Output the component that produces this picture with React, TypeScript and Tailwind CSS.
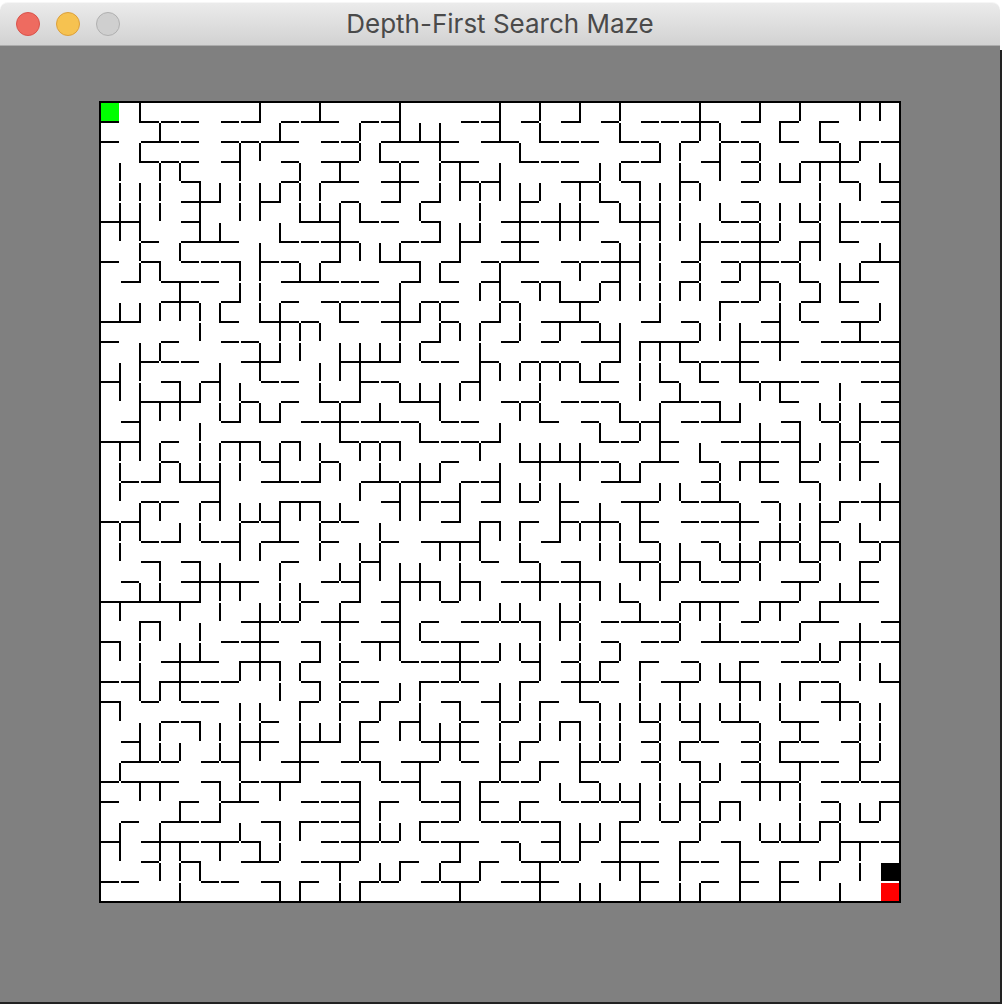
import React from "react";

const COUNT = 40;
const CELL = 20;

/*
 * Walls as "from-to" runs of grid nodes. "<" or ">" closes the corner at the
 * start or at the end of a run; all other run ends stop short of the node.
 */
const HORIZONTAL: string[] = [
  "<0-40>",
  "0-1 <2-3 3-4 4-5 6-7 7-8> 9-10 10-12 13-14 14-15 18-19 19-20 21-22 23-24> 25-26 27-28 28-29 29-31 32-33> <34-35 <36-37",
  "0-1 2-4 4-5 6-7 7-8 8-10 11-12 12-13 14-18 19-21 <22-23 23-24 24-25 <26-27 27-28 29-30 31-32 32-33 <34-35 <36-37 <38-39 39-40",
  "<2-3 3-4 4-5 6-7 9-10 11-13 <14-15 15-16 17-19 <21-22 22-23 23-24 26-27 27-28> 30-31 32-33 35-38",
  "4-5> 9-10 11-13 14-16 18-19 19-20 23-25 26-27> 29-30 32-33 <34-35> <37-38 <39-40",
  "4-6> 8-9> 12-13 14-15> 16-17> 21-22 <25-26 32-33 39-40",
  "0-2 4-5 <10-12 <13-14 14-15 16-17> 20-22 22-25 <26-28 31-32 32-33 <35-36 37-38 38-39 39-40",
  "2-3 4-7 <9-10 10-11 11-13 15-16 16-17> 18-19> 20-22 25-26 30-31 31-32 32-34 <35-36 <37-38",
  "0-1 2-3> 4-5 5-6 6-7> 8-9 9-10 11-12> <14-16> 17-18> 19-20 20-22 23-24 24-25 25-27 29-30 31-32 32-34 34-35 38-40",
  "1-2> 3-5 5-6 9-12 12-13 13-14 15-16> <17-18 19-20 21-22 22-23> 25-26 <29-30 31-32 33-34 <35-36 37-39",
  "3-5 6-7> 9-10 11-12 12-13 13-14 14-15 16-17 17-18 20-21 <23-25 <31-32 32-33 35-36> <37-38",
  "0-2> <6-7 <8-10 10-11 <12-13 14-16> 17-18 19-20> 22-25 27-28> 29-30 33-34 35-36 37-39",
  "0-1 3-4 6-7 7-8 16-17> 20-21 22-23 24-26 <27-30 32-33 33-35 36-37 37-39 39-40",
  "2-3 3-4 4-5 7-9> <12-15> 16-17 17-18 19-20 21-22 22-23 23-24 25-26> <29-30 30-31 31-33 35-36 36-37 37-38 38-39 39-40",
  "0-1 3-4> 5-6 8-9 9-10 13-14 14-15 18-19 <24-26 <28-29 <30-31 <32-33 33-35 35-36 38-39 39-40",
  "2-5> 7-8 9-10 <11-12 12-13> <15-17 20-21 21-22 23-24 24-25 25-26 28-30 30-31> <34-35 39-40",
  "1-2 6-7> <8-9> 10-11 11-13 13-15 15-16 17-18 18-19 <22-23 24-25 <26-27 27-28 29-30 30-32> 34-35> 36-37 38-39 39-40",
  "0-2 3-4 6-8> 9-10> <12-13 13-14 14-15> <16-17 17-18 18-19 19-20> <25-26 26-27 28-29 31-32 32-34 34-35 37-38 39-40",
  "3-4 8-9 11-12 17-18 <21-25 25-26 27-29 <30-31 <32-34 35-36 38-39",
  "1-2 2-3> <4-6 8-10 10-11> 13-15 15-17> 18-19 19-20 25-27> 30-31 <33-34 <35-36",
  "2-3 3-4 5-6 <9-11> 14-15 16-17 17-18 19-20> <21-22 23-24 26-28 29-30 30-32 33-34 <37-38 38-40",
  "0-1 1-2 7-8 8-9 11-12 12-13 17-18> <19-20> <21-22 23-24 24-26 27-28 29-30 30-31 31-33 36-37",
  "2-3 3-4> 5-6 6-7 8-10 11-12 14-15 16-19 22-23> <27-28 30-31 <33-35 36-37 <38-39 39-40",
  "2-3> 4-5> 9-10 13-14 19-20 <21-22 23-24> <26-28 29-30> 31-33 <35-36 <38-39",
  "1-2 4-8 11-12 12-13 15-17> 18-19> 20-21 21-23 23-25> 28-29 30-31 31-32 34-36 38-39",
  "0-5> 10-11 12-13> 14-15 17-18 <26-27 29-32 <33-35 <36-39",
  "<2-3> 7-9 9-10 11-13 14-15 16-17 18-19 19-20 20-21 21-22> 23-24 25-26 26-28 28-29 32-33 35-37 39-40",
  "0-1> 6-7 7-9 10-11> 13-15 16-17 17-19 25-26 27-28 28-29 30-32 32-33 33-34 34-35 <37-39 39-40",
  "3-6 <7-9> 10-11> 12-13 15-16 16-17 17-19 19-20 21-22 23-24 <25-26 <27-28 29-30 <32-33 34-35 35-36 36-37",
  "0-1 1-2 <3-5 5-6 6-7 10-11> 12-13 13-14 <16-17 17-18 18-19 <21-22 23-25 25-26 28-30 <31-33> <35-36 36-37 <39-40",
  "0-1> 2-3 4-5 5-6 <10-11 12-13 <14-15 17-18> 19-20 <22-23 <24-25 36-38",
  "3-4 4-5> 8-9 <13-14 <15-16 18-19 20-21 <23-24> <27-28 29-30 31-33 34-36",
  "1-2 7-9 <10-12> 13-14 16-19 <21-22 27-28 <29-30 30-31 32-33 <34-35 35-36 37-38",
  "1-3 3-4 5-6 6-7 9-11 12-13 13-14> 15-17 18-19 20-21 <22-23 24-25 25-26 27-28 29-30> 32-33 <34-36 36-37 38-39",
  "0-1 1-4 5-6> 7-8 8-10> 11-12 12-13> 14-15 15-16 17-18> <19-20 20-21 21-22 <24-25 30-31 32-35 36-37 37-38 38-39 39-40",
  "0-1 <4-5 6-8 10-11 11-12 12-13 <14-15 16-17 17-18 19-20 <21-22 23-24 24-25 25-26 26-27 29-30 <31-32> 36-37 <39-40",
  "1-2 3-5 5-6> 8-9> <10-11 11-12 12-13 <16-17 17-18 19-20 20-21 21-22 22-23> <26-27 28-29 30-31 <36-37 <38-39",
  "0-1 2-5 5-7 7-8> 11-12 12-14 14-15 16-17 17-19 20-21 22-23 24-25 26-27 27-28 <29-30 31-32> 33-34 34-36 37-39 39-40",
  "2-3 4-5> 7-9 10-11 11-13 <15-16 17-18> <19-20 21-23 23-24 25-28 29-30 30-31 32-33 <34-35 <36-37",
  "0-1 1-2 5-6 6-7 8-9> <10-11 <13-14 14-15 16-17 17-19 20-21 21-23 27-28 30-31 32-33 34-35",
  "<0-40>",
];

const VERTICAL: string[] = [
  "0-40",
  "3-4 4-5 5-7 10-11 13-15 17-18 18-19 19-20 21-22 22-23 25-26 27-28 30-31 33-34 36-38",
  "0-1 2-3 4-5 5-7 7-8 8-9 10-11 12-14 14-18 20-22 24-25 26-27 27-28 28-30 31-33 34-35",
  "1-2 3-4 4-5 5-6 8-9 10-11 12-13 15-16 17-18 18-19 20-21 23-24 24-25 26-27 29-30 31-32 32-33 34-35 36-38 38-39",
  "3-4 7-8 9-11 14-16 18-19 21-22 25-26 27-30 32-33 35-36 37-38 38-39 39-40",
  "4-7 10-11 11-12 14-15 16-17 17-18 18-19 20-21 21-22 23-25 26-27 27-28 31-32 38-39",
  "4-5 6-7 10-11 13-15 15-16 17-18 18-21 23-25 25-26 31-32 32-33 34-35 35-36 37-38",
  "2-4 4-5 5-6 8-9 9-10 14-15 15-16 17-18 18-19 20-21 21-23 24-25 28-29 30-31 31-34 34-35 36-37",
  "0-1 2-3 4-6 7-9 9-10 10-11 12-14 15-16 17-18 20-21 22-23 25-29 30-31 31-33 37-38",
  "1-2 4-5 6-7 10-12 12-13 15-16 17-19 20-22 23-24 24-25 25-26 28-29 29-30 34-35 36-37 37-38 39-40",
  "3-4 4-5 5-6 8-9 11-12 12-13 17-18 20-21 24-25 25-26 28-29 30-31 31-34 36-37 39-40",
  "0-1 4-5 5-6 8-9 11-12 13-14 14-15 17-18 18-19 20-21 21-22 22-23 27-28 29-30 31-32",
  "3-4 5-8 10-11 12-14 15-17 18-19 20-21 23-24 25-27 27-28 28-29 29-30 30-31 31-32 38-39 39-40",
  "1-2 2-3 5-6 7-8 12-15 17-18 19-20 22-23 23-25 31-33 34-38 39-40",
  "2-3 7-8 12-13 15-16 17-18 18-19 21-22 22-24 27-28 30-31 33-34 35-36 36-37 38-39",
  "0-2 3-5 7-8 9-12 12-13 14-15 17-18 19-21 23-28 29-30 31-32 36-37 38-39",
  "1-2 5-6 8-9 10-11 12-13 14-15 16-17 18-21 23-25 26-27 29-30 30-32 33-35 36-37",
  "1-3 3-4 4-5 6-7 8-9 10-11 11-12 14-16 18-19 22-23 24-25 31-33 38-39",
  "3-5 6-8 11-12 14-15 19-21 22-23 23-25 27-29 30-31 31-33 34-36 37-38 39-40",
  "4-5 5-6 6-7 9-10 11-12 12-15 17-18 21-23 24-25 34-36 38-39",
  "0-2 3-5 8-10 10-11 13-14 16-17 18-20 21-22 25-26 27-28 29-31 31-32 32-34",
  "2-3 4-8 10-11 11-12 13-14 15-16 17-18 19-20 21-22 22-23 25-26 27-28 29-30 30-31 32-33 35-36 37-38",
  "0-1 1-2 4-5 9-10 13-14 14-15 15-16 17-19 19-20 23-25 26-27 27-29 30-31 31-32 33-34 38-40",
  "5-7 9-10 11-12 13-14 17-18 19-22 25-27 31-32 34-35 36-38",
  "0-1 4-5 5-7 8-9 10-11 13-14 17-19 21-22 23-25 25-26 26-27 27-28 28-30 31-32 32-34 36-38 39-40",
  "3-4 4-5 9-10 11-12 13-14 16-17 20-22 22-23 24-25 28-29 30-31 31-32 32-33 34-35 36-37 39-40",
  "0-1 1-2 3-4 5-6 7-10 11-13 15-16 18-19 21-22 22-23 24-25 27-28 30-31 31-32 32-33 34-35 36-39",
  "4-5 5-7 7-9 9-10 12-13 13-14 14-15 16-17 18-19 20-22 23-24 25-26 28-29 29-30 30-31 34-36 38-40",
  "2-3 4-5 5-7 7-8 8-9 9-10 10-11 12-13 13-14 15-18 19-20 22-23 23-25 30-31 31-32 32-33 33-34 34-35 35-36",
  "2-3 3-5 5-6 6-7 9-10 12-13 14-15 19-20 22-24 25-26 26-27 29-30 30-31 32-33 34-36 37-39 39-40",
  "0-2 4-5 6-8 8-9 9-10 11-12 13-14 17-18 23-24 25-26 28-29 30-32 33-34 34-36 36-37 39-40",
  "1-2 2-4 5-6 10-11 11-12 15-16 18-19 19-20 22-23 25-26 26-27 28-29 30-31 33-34 35-36",
  "8-9 11-14 15-16 18-19 20-22 22-24 28-30 30-31 35-36 37-40",
  "0-1 2-3 3-4 5-6 6-10 14-15 16-19 22-23 23-24 25-26 29-30 31-32 32-33 33-35 36-37",
  "1-2 3-4 5-6 6-7 9-10 10-13 14-15 20-21 21-23 25-26 29-30 30-31 32-33 34-35 36-37 38-40",
  "0-1 3-4 5-6 7-8 8-9 10-11 16-19 20-21 21-22 22-23 24-25 26-27 29-30 31-32 33-34 34-35 35-36 36-37",
  "1-2 3-4 4-5 5-6 6-8 9-10 15-16 17-18 19-20 20-23 23-24 25-26 27-28 36-37 38-39",
  "2-4 5-7 8-10 14-15 15-16 16-18 18-19 20-21 22-23 24-25 27-28 29-31 35-36 36-38 39-40",
  "0-1 2-3 4-5 8-9 11-12 15-17 17-19 21-22 23-25 26-28 28-29 30-31 31-32 32-34 35-36 37-38 38-39",
  "0-1 3-4 7-8 10-11 19-21 22-23 28-29 30-31 31-32 32-33 35-36",
  "0-40",
];

type Run = { start: number; length: number };

function parseRuns(line: string): Run[] {
  return line.split(" ").map((token) => {
    const [from, to] = token.replace(/[<>]/g, "").split("-").map(Number);
    const start = from * CELL + (token.startsWith("<") ? 0 : 2);
    const end = to * CELL + (token.endsWith(">") ? 2 : 0);
    return { start, length: end - start };
  });
}

function Maze() {
  const size = COUNT * CELL + 2;
  return (
    <svg
      role="img"
      aria-label="Maze"
      viewBox={`0 0 ${size} ${size}`}
      shapeRendering="crispEdges"
      className="block w-full max-w-[802px] bg-white"
    >
      {HORIZONTAL.map((line, row) =>
        parseRuns(line).map((run) => (
          <rect key={`h${row}-${run.start}`} x={run.start} y={row * CELL} width={run.length} height={2} />
        )),
      )}
      {VERTICAL.map((line, column) =>
        parseRuns(line).map((run) => (
          <rect key={`v${column}-${run.start}`} x={column * CELL} y={run.start} width={2} height={run.length} />
        )),
      )}
      <rect x={2} y={2} width={18} height={18} fill="#00ff00" />
      <rect x={782} y={762} width={18} height={18} fill="#000000" />
      <rect x={782} y={782} width={18} height={18} fill="#ff0000" />
    </svg>
  );
}

function TitleBar() {
  return (
    <header className="relative flex h-11 items-center justify-center rounded-t-lg border-t border-b border-t-[#f6f6f6] border-b-[#acacac] bg-linear-to-b from-[#ebebeb] to-[#d2d2d2]">
      <div className="absolute left-4 flex gap-4">
        <button aria-label="Close" className="size-6 rounded-full border border-[#d9534b] bg-[#ee6b60]" />
        <button aria-label="Minimize" className="size-6 rounded-full border border-[#dca03c] bg-[#f6c250]" />
        <button aria-label="Zoom" disabled className="size-6 rounded-full border border-[#b0b0b0] bg-[#cfcfcf]" />
      </div>
      <h1 className="text-[26px] leading-8 text-[#4a4a4a]">Depth-First Search Maze</h1>
    </header>
  );
}

export default function App() {
  return (
    <div className="flex min-h-screen flex-col bg-[linear-gradient(to_bottom,#ffffff_0_50px,#222222_50px)] pt-0.5 pr-0.5 pb-0.5 font-['Inter',sans-serif]">
      <div className="flex grow flex-col">
        <TitleBar />
        <main className="flex grow justify-center bg-[#808080] px-[99px] pt-[55px] pb-[99px]">
          <Maze />
        </main>
      </div>
    </div>
  );
}
